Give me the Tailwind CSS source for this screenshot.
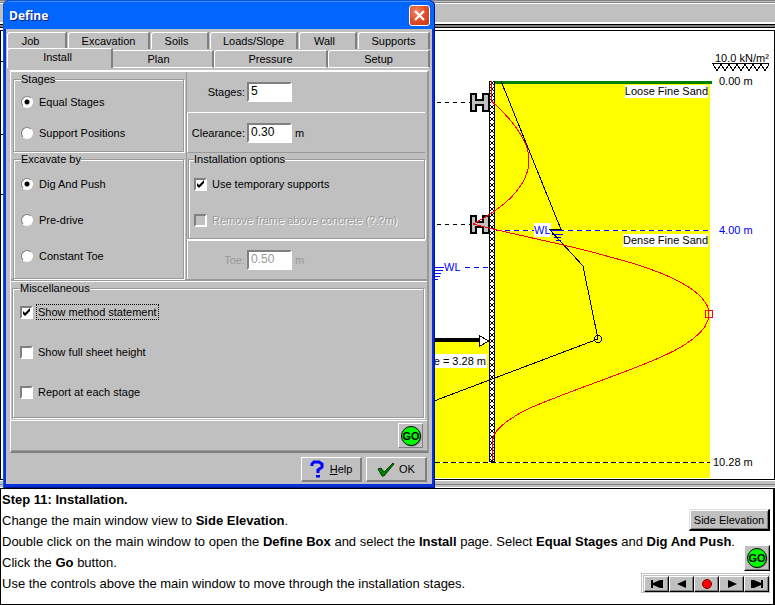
<!DOCTYPE html>
<html lang="en">
<head>
  <meta charset="UTF-8" />
  <title>Step 11: Installation</title>
  <meta name="viewport" content="width=device-width, initial-scale=1.0" />
  <script src="https://cdn.jsdelivr.net/npm/@tailwindcss/browser@4"></script>
</head>
<body class="relative bg-white text-black font-['Liberation_Sans',Arial,sans-serif] text-[11px] leading-[14px] min-h-screen flex flex-col">

  <!-- main window -->
  <main class="flex flex-col">
    <div class="h-[3px] bg-[#c0c0c0] border-t border-b border-[#808080]"></div>
    <div class="h-[20px] bg-[#c0c0c0] border-t border-b border-white"></div>
    <div class="h-[4px] bg-[#808080] border-t border-b border-black mt-px"></div>
    <div class="h-[2px]"></div>
    <div class="border border-black bg-white overflow-hidden">
      <svg class="block w-full h-[448px] text-[11px]" shape-rendering="crispEdges" role="img" aria-label="Side elevation">
        <defs>
          <pattern id="sheet" x="490" y="81" width="4" height="6" patternUnits="userSpaceOnUse">
            <rect width="4" height="6" fill="#fff"/>
            <path d="M0 0h1v1h-1zM3 0h1v1h-1zM1 1h2v2h-2zM0 3h1v1h-1zM3 3h1v1h-1z" fill="#000"/>
          </pattern>
          <g id="frame">
            <path d="M471 94h5v6h7v-6h6v17h-6v-6h-7v6h-5z" fill="#c0c0c0" stroke="#000" stroke-width="2"/>
          </g>
        </defs>
        <g transform="translate(-1 -31)">
          <path d="M0 61.500h3M0 134.500h3M0 194.500h3" stroke="#000"/>
          <!-- soil -->
          <rect x="495" y="84" width="215" height="394" fill="#ff0"/>
          <rect x="430" y="342" width="59" height="136" fill="#ff0"/>
          <rect x="489" y="462" width="6" height="16" fill="#ff0"/>
          <rect x="495" y="81" width="217" height="3" fill="#008000"/>
          <path d="M430 462.500H710" stroke="#fff"/>
          <path d="M435 462.500H710" stroke="#000" stroke-dasharray="5 3"/>
          <path d="M495 230.500H710" stroke="#fff"/>
          <path d="M496 230.500H710" stroke="#00f" stroke-dasharray="5 4"/>
          <path d="M437 102.500H470M437 224.500H470" stroke="#000" stroke-dasharray="4 4"/>
          <path d="M465 267.500H489" stroke="#00f" stroke-dasharray="5 4"/>
          <!-- sheet pile and supports -->
          <rect x="489" y="81" width="6" height="381" fill="#000"/>
          <rect x="490" y="81" width="4" height="380" fill="url(#sheet)"/>
          <use href="#frame"/>
          <use href="#frame" y="122"/>
          <!-- toe arrow -->
          <rect x="430" y="338" width="50" height="4" fill="#000"/>
          <path d="M479.500 335.500v11l9-5.500z" fill="#fff" stroke="#000"/>
          <rect x="430" y="354" width="57" height="14" fill="#fff"/>
          <text x="486" y="365" text-anchor="end">Toe = 3.28 m</text>
          <!-- water levels -->
          <rect x="534" y="223" width="17" height="14" fill="#fff"/>
          <path d="M551 230.500h13M552 234.500h11M554 237.500h7M556 240.500h5" stroke="#00f"/>
          <path d="M435 267.500h9M435 270.500h8M435 273.500h6M435 276.500h5M435 279.500h3" stroke="#00f"/>
          <g fill="#00f">
            <text x="534" y="234">WL</text>
            <text x="444" y="271">WL</text>
          </g>
          <!-- pressure envelope -->
          <path d="M501 81L561 229.500H549.500L583 266L598 339L434 401" fill="none" stroke="#000"/>
          <circle cx="598" cy="339" r="3.500" fill="none" stroke="#000"/>
          <!-- bending moment -->
          <path d="M491.500 81V101C504 112 529 137 529 160C529 187 502 209 473 224C510 234 570 245 610 257C665 271 709 291 709 314C709 333 680 350 647 363C610 378 570 391 530 408C515 415 492 429 492.500 441V460" fill="none" stroke="#f00"/>
          <rect x="705.500" y="310.500" width="7" height="7" fill="none" stroke="#f00"/>
          <!-- labels -->
          <rect x="625" y="85" width="83" height="13" fill="#fff"/>
          <text x="708" y="95" text-anchor="end">Loose Fine Sand</text>
          <rect x="623" y="234" width="85" height="13" fill="#fff"/>
          <text x="708" y="244" text-anchor="end">Dense Fine Sand</text>
          <text x="715" y="62">10.0 kN/m²</text>
          <path d="M712 63.500h57M713 64l4 7l4-7l4 7l4-7l4 7l4-7l4 7l4-7l4 7l4-7l4 7l4-7l4 7l4-7" fill="none" stroke="#000"/>
          <text x="719" y="85">0.00 m</text>
          <text x="719" y="234" fill="#00f">4.00 m</text>
          <text x="713" y="466">10.28 m</text>
        </g>
      </svg>
    </div>
    <div class="h-[8px] bg-[#c0c0c0] border-t border-b border-white flex items-center"><div class="w-full h-px bg-[#808080]"></div></div>
  </main>

  <!-- method statement -->
  <section class="flex-1 border border-black border-r-2 bg-white pl-px pr-[3px] text-[13px] leading-[21px] whitespace-nowrap">
    <h1 class="font-bold">Step 11: Installation.</h1>
    <div class="flex items-end justify-between h-[21px]">
      <p>Change the main window view to <b>Side Elevation</b>.</p>
      <button class="h-[22px] w-[81px] bg-[#c0c0c0] text-[11px] leading-[14px] border border-[#dfdfdf] border-r-2 border-b-2 border-r-black border-b-black shadow-[inset_1px_1px_0_#fff,inset_-1px_-1px_0_#808080]">Side Elevation</button>
    </div>
    <p>Double click on the main window to open the <b>Define Box</b> and select the <b>Install</b> page. Select <b>Equal Stages</b> and <b>Dig And Push</b>.</p>
    <div class="flex items-end justify-between h-[21px]">
      <p>Click the <b>Go</b> button.</p>
      <button aria-label="Go" class="size-[26px] mb-0.5 shrink-0 bg-[#c0c0c0] border border-white border-r-black border-b-black shadow-[inset_-1px_-1px_0_#808080] grid place-items-center">
        <svg class="size-[22px]" viewBox="0 0 22 22"><circle cx="12" cy="12" r="9.500" fill="#808080"/><circle cx="11" cy="11" r="9.500" fill="#0f0" stroke="#000"/><text x="11" y="15" text-anchor="middle" font-size="11" font-weight="bold">GO</text></svg>
      </button>
    </div>
    <div class="flex items-end justify-between h-[21px]">
      <p>Use the controls above the main window to move through the installation stages.</p>
      <div class="flex h-[20px] w-[129px] mb-px pl-0.5 pt-0.5 border border-[#c0c0c0] bg-[#c0c0c0] shadow-[inset_1px_1px_0_#fff]">
        <button aria-label="First" class="flex-1 grid place-items-center border border-white border-r-black border-b-black shadow-[inset_-1px_-1px_0_#808080]"><svg class="w-[12px] h-[8px]" viewBox="0 0 12 8"><path d="M0 0h2v3l7-3h3v8h-3l-7-3v3h-2z"/></svg></button>
        <button aria-label="Back" class="flex-1 grid place-items-center border border-white border-r-black border-b-black shadow-[inset_-1px_-1px_0_#808080]"><svg class="w-[12px] h-[8px]" viewBox="0 0 12 8"><path d="M1 4l9-4v8z"/></svg></button>
        <button aria-label="Stop" class="flex-1 grid place-items-center border border-white border-r-black border-b-black shadow-[inset_-1px_-1px_0_#808080]"><svg class="w-[12px] h-[10px]" viewBox="0 0 12 10"><circle cx="6" cy="5" r="4.500" fill="#f00" stroke="#800000"/></svg></button>
        <button aria-label="Forward" class="flex-1 grid place-items-center border border-white border-r-black border-b-black shadow-[inset_-1px_-1px_0_#808080]"><svg class="w-[12px] h-[8px]" viewBox="0 0 12 8"><path d="M11 4l-9-4v8z"/></svg></button>
        <button aria-label="Last" class="flex-1 grid place-items-center border border-white border-r-black border-b-black shadow-[inset_-1px_-1px_0_#808080]"><svg class="w-[12px] h-[8px]" viewBox="0 0 12 8"><path d="M12 0h-2v3l-7-3h-3v8h3l7-3v3h2z"/></svg></button>
      </div>
    </div>
  </section>

  <!-- Define dialog -->
  <div role="dialog" aria-labelledby="dlgTitle" class="absolute left-[3px] top-0 w-[432px] bg-[#0831d9] rounded-t-md shadow-[inset_1px_1px_0_#0855dd,inset_-1px_-1px_0_#00138c]">
    <div class="h-[29px] mx-px mt-px pl-[5px] pr-1 flex items-center justify-between bg-[#0066ff] border-t border-t-[#3c8cff] border-b border-b-[#0040d0] rounded-t-md -mb-px">
      <h2 id="dlgTitle" class="font-['Open_Sans',sans-serif] font-bold text-[12px] text-white [text-shadow:1px_1px_0_#0a1883]">Define</h2>
      <button aria-label="Close" class="size-[21px] rounded-[3px] border border-white bg-[radial-gradient(circle_at_35%_30%,#f08a68,#e04f28_50%,#c83410)] grid place-items-center">
        <svg class="size-[13px]" viewBox="0 0 13 13"><path d="M2 2l9 9M11 2l-9 9" stroke="#fff" stroke-width="2.200"/></svg>
      </button>
    </div>
    <div class="mx-[3px] bg-[#c0c0c0] pt-[3px]">
      <!-- tabs -->
      <div role="tablist" class="pl-px pr-px">
        <div class="flex h-[17px] gap-px pr-px">
          <button role="tab" class="w-[60px] pr-3 rounded-tl-[3px] border-t border-l border-white border-r-2 border-r-[#808080]">Job</button>
          <button role="tab" class="w-[82px] rounded-tl-[3px] border-t border-l border-white border-r-2 border-r-[#808080]">Excavation</button>
          <button role="tab" class="w-[58px] pr-1.5 rounded-tl-[3px] border-t border-l border-white border-r-2 border-r-[#808080]">Soils</button>
          <button role="tab" class="w-[88px] rounded-tl-[3px] border-t border-l border-white border-r-2 border-r-[#808080]">Loads/Slope</button>
          <button role="tab" class="w-[58px] pr-1.5 rounded-tl-[3px] border-t border-l border-white border-r-2 border-r-[#808080]">Wall</button>
          <button role="tab" class="flex-1 rounded-tl-[3px] border-t border-l border-white border-r-2 border-r-[#808080]">Supports</button>
        </div>
        <div class="flex items-end h-[19px] pr-px">
          <button role="tab" aria-selected="true" class="w-[106px] h-[20px] pb-1 pr-1 bg-[#c0c0c0] rounded-tl-[3px] border-t border-l border-white border-r-2 border-r-[#808080]">Install</button>
          <button role="tab" class="w-[101px] h-[18px] pr-2 border-y border-y-white border-r-2 border-r-[#808080]">Plan</button>
          <button role="tab" class="w-[114px] h-[18px] rounded-tl-[3px] border-y border-l border-white border-r-2 border-r-[#808080]">Pressure</button>
          <button role="tab" class="flex-1 h-[18px] rounded-tl-[3px] border-y border-l border-white border-r-2 border-r-[#808080]">Setup</button>
        </div>
      </div>

      <form class="ml-[4px] mr-[3px] mt-[2px] border-t-2 border-l border-white border-r-2 border-r-[#999] border-b-2 border-b-[#808080]">
        <div class="flex">
          <div class="w-[176px] border-r border-[#999] px-[2px] pt-px">
            <fieldset class="h-[79px] border border-[#999] shadow-[1px_1px_0_#fff,inset_1px_1px_0_#fff] pl-[7px]">
              <legend class="bg-[#c0c0c0] leading-[13px]">Stages</legend>
              <label class="flex items-center gap-1.5 h-[31px]"><input type="radio" name="stages" checked class="appearance-none size-[12px] rounded-full border border-[#808080] border-r-white border-b-white bg-white checked:bg-[radial-gradient(circle,#000_2px,#fff_3px)]">Equal Stages</label>
              <label class="flex items-center gap-1.5 h-[31px]"><input type="radio" name="stages" class="appearance-none size-[12px] rounded-full border border-[#808080] border-r-white border-b-white bg-white">Support Positions</label>
            </fieldset>
            <fieldset class="h-[126px] mt-px border border-[#999] shadow-[1px_1px_0_#fff,inset_1px_1px_0_#fff] pl-[7px]">
              <legend class="bg-[#c0c0c0] leading-[13px]">Excavate by</legend>
              <label class="flex items-center gap-1.5 h-[36px]"><input type="radio" name="excavate" checked class="appearance-none size-[12px] rounded-full border border-[#808080] border-r-white border-b-white bg-white checked:bg-[radial-gradient(circle,#000_2px,#fff_3px)]">Dig And Push</label>
              <label class="flex items-center gap-1.5 h-[36px]"><input type="radio" name="excavate" class="appearance-none size-[12px] rounded-full border border-[#808080] border-r-white border-b-white bg-white">Pre-drive</label>
              <label class="flex items-center gap-1.5 h-[36px]"><input type="radio" name="excavate" class="appearance-none size-[12px] rounded-full border border-[#808080] border-r-white border-b-white bg-white">Constant Toe</label>
            </fieldset>
          </div>
          <div class="flex-1 pr-0.5">
            <div class="flex items-center h-[41px] border-b border-white">
              <label for="stageCount" class="w-[58px] text-right">Stages:</label>
              <input id="stageCount" value="5" class="ml-0.5 w-[45px] h-[20px] px-0.5 pb-0.5 bg-white text-[12px] border-2 border-[#808080] border-r-white border-b-white">
            </div>
            <div class="flex items-center h-[40px] border-l border-l-white border-b border-b-[#999]">
              <label for="clearance" class="w-[57px] text-right">Clearance:</label>
              <input id="clearance" value="0.30" class="ml-0.5 w-[45px] h-[20px] px-0.5 pb-0.5 bg-white text-[12px] border-2 border-[#808080] border-r-white border-b-white">
              <span class="ml-[3px]">m</span>
            </div>
            <fieldset class="h-[86px] ml-px border border-[#999] shadow-[1px_1px_0_#fff,inset_1px_1px_0_#fff] pl-[5px]">
              <legend class="bg-[#c0c0c0] leading-[13px]">Installation options</legend>
              <label class="flex items-center gap-[5px] h-[36px]">
                <span class="grid"><input type="checkbox" checked class="col-start-1 row-start-1 appearance-none size-[13px] bg-white border-2 border-[#808080] border-r-white border-b-white"><svg class="col-start-1 row-start-1 size-[13px] pointer-events-none" viewBox="0 0 13 13"><path d="M3 5v3l2 2l5-5v-3l-5 5z"/></svg></span>
                Use temporary supports
              </label>
              <label class="flex items-center gap-[5px] h-[36px] text-[#999] [text-shadow:1px_1px_0_#fff]">
                <input type="checkbox" disabled class="appearance-none size-[13px] bg-[#c0c0c0] border-2 border-[#808080] border-r-white border-b-white">
                Remove frame above concrete (?.?m)
              </label>
            </fieldset>
            <div class="flex items-center h-[40px] border-t-2 border-l border-white text-[#999]">
              <label for="toe" class="w-[57px] text-right">Toe:</label>
              <input id="toe" value="0.50" disabled class="ml-0.5 w-[45px] h-[20px] px-0.5 pb-0.5 bg-white text-[12px] border-2 border-[#808080] border-r-white border-b-white">
              <span class="ml-[3px]">m</span>
            </div>
          </div>
        </div>
        <div class="border-t-2 border-t-[#999] px-px pt-px shadow-[inset_0_1px_0_#fff]">
          <fieldset class="h-[136px] mr-0.5 border border-[#999] shadow-[1px_1px_0_#fff,inset_1px_1px_0_#fff] pl-[7px]">
            <legend class="bg-[#c0c0c0] leading-[13px]">Miscellaneous</legend>
            <div class="flex flex-col items-start gap-[26px] pt-2.5">
              <label class="flex items-center gap-1 h-[14px]">
                <span class="grid"><input type="checkbox" checked class="col-start-1 row-start-1 appearance-none size-[13px] bg-white border-2 border-[#808080] border-r-white border-b-white"><svg class="col-start-1 row-start-1 size-[13px] pointer-events-none" viewBox="0 0 13 13"><path d="M3 5v3l2 2l5-5v-3l-5 5z"/></svg></span>
                <span class="outline-1 outline-dotted outline-black px-px">Show method statement</span>
              </label>
              <label class="flex items-center gap-[5px] h-[14px]"><input type="checkbox" class="appearance-none size-[13px] bg-white border-2 border-[#808080] border-r-white border-b-white">Show full sheet height</label>
              <label class="flex items-center gap-[5px] h-[14px]"><input type="checkbox" class="appearance-none size-[13px] bg-white border-2 border-[#808080] border-r-white border-b-white">Report at each stage</label>
            </div>
          </fieldset>
        </div>
        <div class="flex items-center justify-end h-[31px] mt-0.5 pr-1 border-t border-t-white border-b border-b-[#999]">
          <button type="button" aria-label="Go" class="size-[25px] bg-[#c0c0c0] border border-white border-r-[#808080] border-b-[#808080] grid place-items-center">
            <svg class="size-[22px]" viewBox="0 0 22 22"><circle cx="12" cy="12" r="9.500" fill="#808080"/><circle cx="11" cy="11" r="9.500" fill="#0f0" stroke="#000"/><text x="11" y="15" text-anchor="middle" font-size="11" font-weight="bold">GO</text></svg>
          </button>
        </div>
      </form>
      <div class="flex justify-end gap-1 pt-1 pb-0.5 pr-[5px]">
        <button class="w-[61px] h-[25px] flex items-center justify-center gap-1.5 border border-white border-r-2 border-b-2 border-r-[#808080] border-b-[#808080]">
          <svg class="w-[14px] h-[18px]" viewBox="0 0 14 18"><path d="M2 6V4l2-2h5l3 2v3L8 10v3" fill="none" stroke="#00f" stroke-width="3"/><path d="M6 15h4v2.500h-4z" fill="#00f"/></svg>
          <span><u>H</u>elp</span>
        </button>
        <button class="w-[61px] h-[25px] flex items-center justify-center gap-1 border border-white border-r-2 border-b-2 border-r-[#808080] border-b-[#808080]">
          <svg class="w-[18px] h-[16px]" viewBox="0 0 18 16"><path d="M1 8l3-1l3 4l9-9l1 1L7 15H5z" fill="#008000" stroke="#004000"/></svg>
          OK
        </button>
      </div>
    </div>
    <div class="h-[4px]"></div>
  </div>
</body>
</html>
